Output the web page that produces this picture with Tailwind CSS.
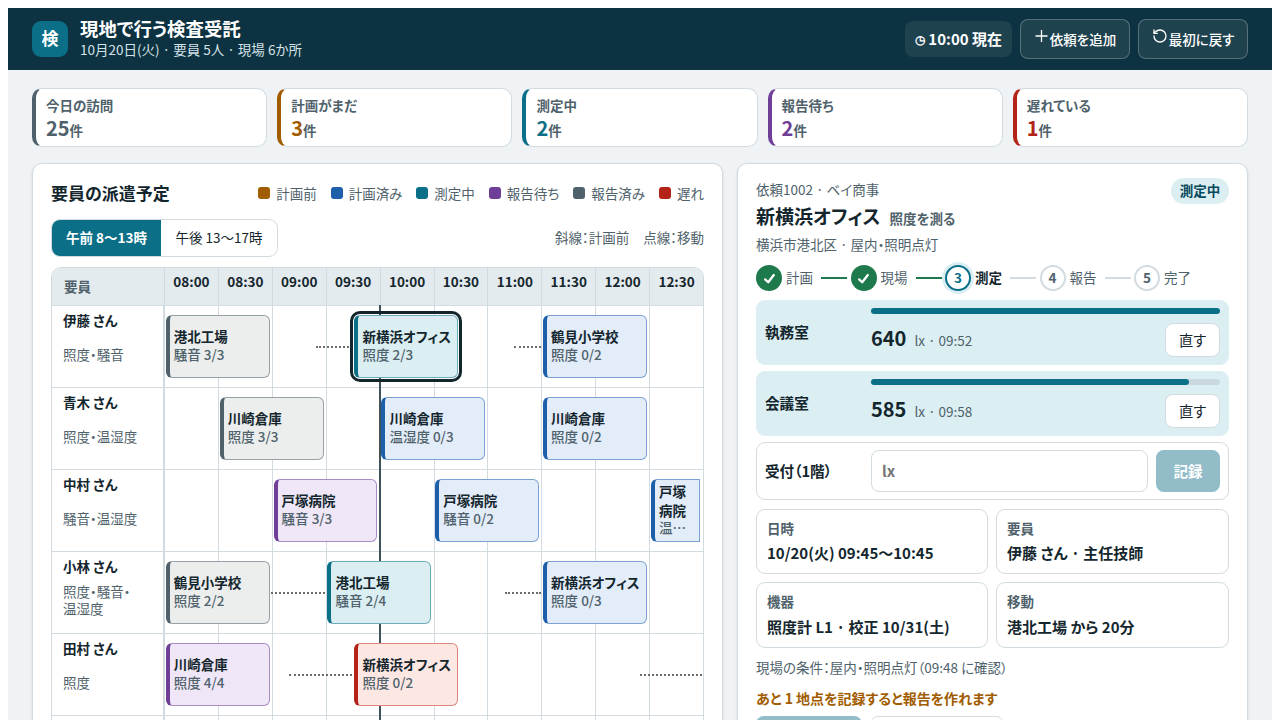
<!DOCTYPE html>
<html lang="ja">
<head>
  <meta charset="UTF-8" />
  <meta name="viewport" content="width=device-width, initial-scale=1.0" />
  <title>現地で行う検査受託</title>
  <script src="https://cdn.jsdelivr.net/npm/@tailwindcss/browser@4"></script>
</head>
<body class="bg-white p-2 h-[720px] overflow-hidden font-['Noto_Sans_CJK_JP',sans-serif] text-[#14262d] [font-feature-settings:'palt']">
<div class="h-[712px] overflow-hidden bg-[#eff3f6]">

  <header class="h-[62px] px-6 bg-[#0d3241] text-white flex items-center">
    <div class="w-9 h-9 pb-[2px] rounded-[9px] bg-[#0b6f88] flex items-center justify-center text-[17px] font-bold">検</div>
    <div class="ml-3 pb-[2px]">
      <h1 class="text-[18.4px] leading-[21px] font-bold">現地で行う検査受託</h1>
      <p class="text-[13.5px] leading-[20px] text-[#d5e3e8]">10月20日(火) · 要員 5人 · 現場 6か所</p>
    </div>
    <div class="ml-auto flex items-center gap-2">
      <div class="h-9 px-[10px] rounded-lg bg-white/8 flex items-center text-[15px] font-bold whitespace-pre"><span class="text-[12px]">◷</span> 10:00 現在</div>
      <button class="h-10 w-[110px] rounded-lg border border-white/25 bg-white/8 flex items-center justify-center gap-[2px] text-[13.5px] font-medium">
        <svg class="w-[14px] h-[14px] -mt-[6px]" viewBox="0 0 14 14" fill="none" stroke="currentColor" stroke-width="1.3"><path d="M7.5 1v12M1.5 7h12" /></svg>
        依頼を追加
      </button>
      <button class="h-10 w-[110px] rounded-lg border border-white/25 bg-white/8 flex items-center justify-center gap-px text-[13.5px] font-medium">
        <svg class="w-4 h-4 -mt-[6px]" viewBox="0 0 24 24" fill="none" stroke="currentColor" stroke-width="2" stroke-linecap="round" stroke-linejoin="round"><path d="M3 12a9 9 0 1 0 9-9 9.75 9.75 0 0 0-6.74 2.74L3 8" /><path d="M3 3v5h5" /></svg>
        最初に戻す
      </button>
    </div>
  </header>

  <section class="px-6 pt-[18px] grid grid-cols-5 gap-[10px]">
    <div class="h-[59px] pl-[10px] pt-[7px] bg-white rounded-[10px] border border-[#d2dbe0] border-l-4 border-l-[#4f626b]">
      <div class="text-[13.5px] leading-[19px] font-bold text-[#4f626b]">今日の訪問</div>
      <div class="text-[13.5px] leading-[25px] font-bold text-[#4f626b]"><span class="text-[20px]">25</span>件</div>
    </div>
    <div class="h-[59px] pl-[10px] pt-[7px] bg-white rounded-[10px] border border-[#d2dbe0] border-l-4 border-l-[#a15c00]">
      <div class="text-[13.5px] leading-[19px] font-bold text-[#4f626b]">計画がまだ</div>
      <div class="text-[13.5px] leading-[25px] font-bold text-[#4f626b]"><span class="text-[20px] text-[#a15c00]">3</span>件</div>
    </div>
    <div class="h-[59px] pl-[10px] pt-[7px] bg-white rounded-[10px] border border-[#d2dbe0] border-l-4 border-l-[#0b6f88]">
      <div class="text-[13.5px] leading-[19px] font-bold text-[#4f626b]">測定中</div>
      <div class="text-[13.5px] leading-[25px] font-bold text-[#4f626b]"><span class="text-[20px] text-[#0b6f88]">2</span>件</div>
    </div>
    <div class="h-[59px] pl-[10px] pt-[7px] bg-white rounded-[10px] border border-[#d2dbe0] border-l-4 border-l-[#6f3f98]">
      <div class="text-[13.5px] leading-[19px] font-bold text-[#4f626b]">報告待ち</div>
      <div class="text-[13.5px] leading-[25px] font-bold text-[#4f626b]"><span class="text-[20px] text-[#6f3f98]">2</span>件</div>
    </div>
    <div class="h-[59px] pl-[10px] pt-[7px] bg-white rounded-[10px] border border-[#d2dbe0] border-l-4 border-l-[#b42318]">
      <div class="text-[13.5px] leading-[19px] font-bold text-[#4f626b]">遅れている</div>
      <div class="text-[13.5px] leading-[25px] font-bold text-[#4f626b]"><span class="text-[20px] text-[#b42318]">1</span>件</div>
    </div>
  </section>

  <main class="px-6 pt-4 grid grid-cols-[691px_511px] gap-[14px]">

    <section class="h-[800px] px-[18px] pt-[17px] bg-white rounded-[10px] border border-[#d2dbe0] shadow-sm">
      <div class="h-6 flex items-center justify-between">
        <h2 class="text-[17px] font-bold">要員の派遣予定</h2>
        <ul id="legend" class="flex gap-[14px] text-[13.5px] text-[#4f626b]"></ul>
      </div>

      <div class="mt-[14px] flex items-center justify-between">
        <div class="h-[38px] flex items-stretch rounded-[9px] border border-[#d2dbe0] overflow-hidden text-[13.5px]">
          <button class="w-[109px] pb-px bg-[#0b6f88] text-white font-bold">午前 8〜13時</button>
          <button class="w-[116px] pb-px">午後 13〜17時</button>
        </div>
        <p class="pb-px text-[13.5px] text-[#4f626b]">斜線：計画前<span class="ml-[14px]">点線：移動</span></p>
      </div>

      <div class="mt-[10px] h-[700px] rounded-[10px] border border-[#d2dbe0] overflow-hidden">
        <div class="h-[38px] grid grid-cols-[112px_1fr] bg-[#e4ebef] border-b border-[#d2dbe0]">
          <div class="pl-3 flex items-center text-[13.5px] font-bold text-[#4f626b]">要員</div>
          <div id="hours" class="grid grid-cols-10"></div>
        </div>
        <div id="rows"></div>
      </div>
    </section>

    <section class="h-[800px] px-[18px] pt-[14px] bg-white rounded-[10px] border border-[#d2dbe0] shadow-sm">
      <div class="flex justify-between items-start">
        <div>
          <p class="text-[13.5px] leading-[22px] text-[#4f626b]">依頼1002 · ベイ商事</p>
          <h2 class="h-8 text-[19px] leading-[32px] font-bold">新横浜オフィス<span class="ml-[9px] text-[13.5px] text-[#4f626b]">照度を測る</span></h2>
          <p class="text-[13.5px] leading-[24px] text-[#4f626b]">横浜市港北区 · 屋内・照明点灯</p>
        </div>
        <span class="h-[26px] w-[58px] rounded-full bg-[#dbeef2] text-[#07495c] text-[13.5px] leading-[24px] font-bold text-center">測定中</span>
      </div>

      <ol class="mt-[9px] flex items-center text-[13.5px] leading-[24px] text-[#4f626b]">
        <li class="w-[94.5px] flex items-center">
          <span class="w-[26px] h-[26px] rounded-full bg-[#1e7a4c] flex items-center justify-center"><svg class="w-[13px] h-[13px]" viewBox="0 0 12 12" fill="none" stroke="#fff" stroke-width="2.1" stroke-linecap="round" stroke-linejoin="round"><path d="M2 6.8 4.8 9.5 10 2.8" /></svg></span>
          <span class="ml-1 pb-[2px]">計画</span><i class="ml-2 w-[26px] h-[2px] bg-[#1e7a4c]"></i>
        </li>
        <li class="w-[94.5px] flex items-center">
          <span class="w-[26px] h-[26px] rounded-full bg-[#1e7a4c] flex items-center justify-center"><svg class="w-[13px] h-[13px]" viewBox="0 0 12 12" fill="none" stroke="#fff" stroke-width="2.1" stroke-linecap="round" stroke-linejoin="round"><path d="M2 6.8 4.8 9.5 10 2.8" /></svg></span>
          <span class="ml-1 pb-[2px]">現場</span><i class="ml-2 w-[26px] h-[2px] bg-[#1e7a4c]"></i>
        </li>
        <li class="w-[94.5px] flex items-center">
          <span class="w-[26px] h-[26px] rounded-full border-2 border-[#0b6f88] bg-white ring-3 ring-[#dbeef2] text-[#0b6f88] font-bold leading-[21px] text-center">3</span>
          <span class="ml-1 pb-[2px] font-bold text-[#14262d]">測定</span><i class="ml-2 w-[26px] h-[2px] bg-[#d2dbe0]"></i>
        </li>
        <li class="w-[94.5px] flex items-center">
          <span class="w-[26px] h-[26px] rounded-full border-2 border-[#d2dbe0] font-bold leading-[21px] text-center">4</span>
          <span class="ml-1 pb-[2px]">報告</span><i class="ml-2 w-[26px] h-[2px] bg-[#d2dbe0]"></i>
        </li>
        <li class="flex items-center">
          <span class="w-[26px] h-[26px] rounded-full border-2 border-[#d2dbe0] font-bold leading-[21px] text-center">5</span>
          <span class="ml-1 pb-[2px]">完了</span>
        </li>
      </ol>

      <div class="mt-[9px] flex flex-col gap-[6px] text-[14.6px]">
        <div class="h-[65px] px-[9px] rounded-[9px] bg-[#dbeef2] grid grid-cols-[106px_1fr] items-center">
          <span class="pb-[2px] font-bold">執務室</span>
          <div class="h-full pt-2">
            <div class="h-[6px] rounded-full bg-[#0b6f88]"></div>
            <div class="mt-[9px] h-[34px] flex items-center">
              <p class="pb-[5px] text-[13.5px] text-[#4f626b]"><b class="mr-2 text-[20px] leading-[30px] text-[#14262d]">640</b>lx · 09:52</p>
              <button class="ml-auto h-[34px] w-[55px] pb-px bg-white rounded-lg border border-[#d2dbe0] text-[14.3px]">直す</button>
            </div>
          </div>
        </div>
        <div class="h-[65px] px-[9px] rounded-[9px] bg-[#dbeef2] grid grid-cols-[106px_1fr] items-center">
          <span class="pb-[2px] font-bold">会議室</span>
          <div class="h-full pt-2">
            <div class="h-[6px] rounded-full bg-[#c9d9df]"><div class="h-full w-[91%] rounded-full bg-[#0b6f88]"></div></div>
            <div class="mt-[9px] h-[34px] flex items-center">
              <p class="pb-[5px] text-[13.5px] text-[#4f626b]"><b class="mr-2 text-[20px] leading-[30px] text-[#14262d]">585</b>lx · 09:58</p>
              <button class="ml-auto h-[34px] w-[55px] pb-px bg-white rounded-lg border border-[#d2dbe0] text-[14.3px]">直す</button>
            </div>
          </div>
        </div>
        <div class="h-[58px] px-2 rounded-[9px] border border-[#d2dbe0] flex items-center">
          <span class="w-[106px] font-bold">受付（1階）</span>
          <input type="text" placeholder="lx" class="h-[42px] flex-1 min-w-0 mr-2 px-[10px] pb-px rounded-lg border border-[#d2dbe0] font-bold text-[15px] placeholder:text-[#757575]" />
          <button class="h-[42px] w-[64px] rounded-lg bg-[#91bcc8] text-white font-bold">記録</button>
        </div>
      </div>

      <dl class="mt-[9px] grid grid-cols-[232px_233px] gap-2 text-[15px] font-bold">
        <div class="h-[65px] px-[10px] pt-2 rounded-[9px] border border-[#d2dbe0]">
          <dt class="text-[13.5px] leading-[20px] text-[#4f626b]">日時</dt><dd class="leading-[30px]">10/20(火) 09:45〜10:45</dd>
        </div>
        <div class="h-[65px] px-[10px] pt-2 rounded-[9px] border border-[#d2dbe0]">
          <dt class="text-[13.5px] leading-[20px] text-[#4f626b]">要員</dt><dd class="leading-[30px]">伊藤 さん · 主任技師</dd>
        </div>
        <div class="h-[66px] px-[10px] pt-2 rounded-[9px] border border-[#d2dbe0]">
          <dt class="text-[13.5px] leading-[20px] text-[#4f626b]">機器</dt><dd class="leading-[32px]">照度計 L1 · 校正 10/31(土)</dd>
        </div>
        <div class="h-[66px] px-[10px] pt-2 rounded-[9px] border border-[#d2dbe0]">
          <dt class="text-[13.5px] leading-[20px] text-[#4f626b]">移動</dt><dd class="leading-[32px]">港北工場 から 20分</dd>
        </div>
      </dl>

      <p class="mt-2 text-[13.5px] leading-[22px] text-[#4f626b]">現場の条件：屋内・照明点灯（09:48 に確認）</p>
      <p class="mt-2 text-[14px] leading-[24px] font-bold text-[#a15c00]">あと 1 地点を記録すると報告を作れます</p>
      <div class="mt-[6px] flex gap-2 text-[14px] font-bold">
        <button class="w-[106px] h-[42px] rounded-lg bg-[#91bcc8] text-white">報告を作る</button>
        <button class="w-[134px] h-[42px] rounded-lg border border-[#d2dbe0]">遅れを連絡する</button>
      </div>
    </section>
  </main>
</div>

<script>
  const legend = [
    ['計画前', 'bg-[#a15c00]'], ['計画済み', 'bg-[#1d5fa8]'], ['測定中', 'bg-[#0b6f88]'],
    ['報告待ち', 'bg-[#6f3f98]'], ['報告済み', 'bg-[#4f626b]'], ['遅れ', 'bg-[#b42318]'],
  ];

  const tone = {
    planned: 'border-[#7ba2d2] border-l-[#1d5fa8] bg-[#e3ecf9]',
    active: 'border-[#6dabb9] border-l-[#0b6f88] bg-[#dbeef2]',
    waiting: 'border-[#a98bc4] border-l-[#6f3f98] bg-[#efe6f7]',
    done: 'border-[#95a1a6] border-l-[#4f626b] bg-[#eceeed]',
    late: 'border-[#dc8880] border-l-[#b42318] bg-[#fde7e3]',
  };

  // visits: [minutes from 08:00, site, detail, tone]; moves: [start, end]
  const staff = [
    { name: '伊藤', skill: '照度・騒音', moves: [[85, 105], [195, 210]],
      visits: [[0, '港北工場', '騒音 3/3', 'done'], [105, '新横浜オフィス', '照度 2/3', 'active', true], [210, '鶴見小学校', '照度 0/2', 'planned']] },
    { name: '青木', skill: '照度・温湿度', moves: [],
      visits: [[30, '川崎倉庫', '照度 3/3', 'done'], [120, '川崎倉庫', '温湿度 0/3', 'planned'], [210, '川崎倉庫', '照度 0/2', 'planned']] },
    { name: '中村', skill: '騒音・温湿度', moves: [],
      visits: [[60, '戸塚病院', '騒音 3/3', 'waiting'], [150, '戸塚病院', '騒音 0/2', 'planned'], [270, '戸塚<br>病院', '温…', 'planned']] },
    { name: '小林', skill: '照度・騒音・<br>温湿度', moves: [[60, 90], [190, 210]],
      visits: [[0, '鶴見小学校', '照度 2/2', 'done'], [90, '港北工場', '騒音 2/4', 'active'], [210, '新横浜オフィス', '照度 0/3', 'planned']] },
    { name: '田村', skill: '照度', moves: [[70, 105], [265, 300]],
      visits: [[0, '川崎倉庫', '照度 4/4', 'waiting'], [105, '新横浜オフィス', '照度 0/2', 'late']] },
    { name: '', skill: '', moves: [], visits: [] },
  ];

  document.getElementById('legend').innerHTML = legend.map(([label, color]) =>
    `<li class="flex items-center gap-[6px]"><i class="w-3 h-3 rounded-[3px] ${color}"></i>${label}</li>`).join('');

  const pad = (n) => String(n).padStart(2, '0');
  let hours = '';
  for (let m = 480; m < 780; m += 30) {
    hours += `<div class="pt-[3px] border-l border-[#d2dbe0] text-center text-[13.5px] leading-[20px] font-bold">${pad(Math.floor(m / 60))}:${pad(m % 60)}</div>`;
  }
  document.getElementById('hours').innerHTML = hours;

  const cells = '<div class="border-l border-[#d2dbe0]"></div>'.repeat(10);

  function visitHTML([start, site, detail, kind, selected]) {
    const cut = start + 60 > 300;
    const span = cut ? 2 : 4;
    return `<div class="row-start-1 h-[63px] mt-[9px] ml-[1.8px] pl-1 flex flex-col border border-l-4 text-[13.5px] ${tone[kind]}
        ${cut ? 'rounded-l-[6px] mr-[3px] pt-[2px]' : 'rounded-[6px] mr-[2.15px] pb-1 justify-center'} ${selected ? 'outline-3 outline-offset-1 outline-[#14262d]' : ''}"
        style="grid-column: ${start / 15 + 1} / span ${span}">
        <b class="whitespace-nowrap ${cut ? 'leading-[19px]' : 'leading-[18px]'}">${site}</b>
        <span class="${cut ? 'leading-[14px]' : 'leading-[18px]'} font-medium text-[#4f626b] whitespace-nowrap">${detail}</span>
      </div>`;
  }

  document.getElementById('rows').innerHTML = staff.map(({ name, skill, moves, visits }) => `
    <div class="h-[82px] grid grid-cols-[112px_1fr] border-b border-[#d2dbe0]">
      <div class="pl-[11px] pt-1 flex flex-col border-r border-[#d2dbe0]">
        <b class="text-[13.5px] leading-[20px]">${name ? name + ' さん' : ''}</b>
        <div class="h-[48px] flex items-center text-[13.5px] leading-[17px] text-[#4f626b]"><span>${skill}</span></div>
      </div>
      <div class="relative">
        <div class="absolute inset-0 grid grid-cols-10">${cells}</div>
        <div class="absolute -top-px -bottom-px w-[2px] bg-[#3f525a]" style="left: calc(${120 / 3}% - 1px)"></div>
        ${moves.map(([a, b]) => `<div class="absolute top-[40px] border-t-2 border-dotted border-[#6b6b6b]" style="left: calc(${a / 3}% - 0.6px); width: ${(b - a) / 3}%"></div>`).join('')}
        <div class="relative grid grid-cols-20">${visits.map(visitHTML).join('')}</div>
      </div>
    </div>`).join('');
</script>
</body>
</html>
